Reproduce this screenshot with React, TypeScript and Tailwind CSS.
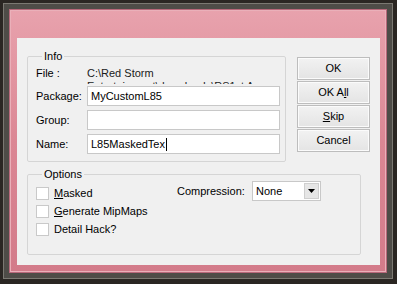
import React from "react";

const font = { fontFamily: '"Liberation Sans", Arial, sans-serif' };

function Btn({ children, className = "" }: { children: React.ReactNode; className?: string }) {
  return (
    <div
      className={
        "h-[23px] w-[73px] flex items-center justify-center border border-[#bdbdbd] bg-gradient-to-b from-[#f2f2f2] to-[#e4e4e4] text-[11px] text-black shadow-[inset_0_0_0_1px_#fbfbfb] " +
        className
      }
    >
      {children}
    </div>
  );
}

function Check({ children }: { children: React.ReactNode }) {
  return (
    <div className="flex items-center h-[13px]">
      <div className="w-[13px] h-[13px] border border-[#c9c9c9] bg-white shrink-0" />
      <span className="ml-[5px] text-[11px] leading-[13px] text-black">{children}</span>
    </div>
  );
}

function Field({ label, value, caret }: { label: string; value: string; caret?: boolean }) {
  return (
    <div className="flex items-center h-[20px]">
      <span className="w-[51px] text-[11px] text-black">{label}</span>
      <div className="w-[193px] h-[20px] border border-[#c8c8c8] bg-white flex items-center pl-[3px] text-[11px] text-black">
        {value}
        {caret && <span className="w-px h-[13px] bg-black ml-[1px]" />}
      </div>
    </div>
  );
}

export default function App() {
  return (
    <div className="w-[397px] h-[284px] bg-[#2a2622] pt-[3px] pl-[3px] overflow-hidden" style={font}>
      <div className="w-[390px] h-[276px] border border-[#7b7972] bg-[#4e4c47] p-[5px]">
        <div className="w-[378px] h-[264px] border border-[#b7687a] bg-gradient-to-b from-[#e8a2ad] via-[#db8794] to-[#d37b8a] pt-[28px] pl-[7px] pr-[6px] pb-[7px] shadow-[inset_0_0_0_1px_#eab0b9]">
          <div className="w-[363px] h-[227px] bg-[#f0f0f0] flex flex-col px-[10px]">
            <div className="flex mt-[12px]">
              <fieldset className="w-[259px] h-[112px] border border-[#d5d5d5] rounded-[2px] pl-[8px] pr-[5px]">
                <legend className="ml-[6px] px-[2px] text-[11px] leading-[13px] text-black">Info</legend>
                <div className="flex h-[18px] mt-[3px]">
                  <span className="w-[51px] text-[11px] leading-[13px] mt-[1px] text-black">File :</span>
                  <span className="w-[190px] h-[17px] overflow-hidden text-[11px] leading-[13px] mt-[1px] text-[#1a1a1a] whitespace-pre">
                    {"C:\\Red Storm\nEntertainment\\downloads\\RS1st Assault\\"}
                  </span>
                </div>
                <div className="flex flex-col gap-[4px] mt-[2px]">
                  <Field label="Package:" value="MyCustomL85" />
                  <Field label="Group:" value="" />
                  <Field label="Name:" value="L85MaskedTex" caret />
                </div>
              </fieldset>
              <div className="ml-[11px] mt-[7px] flex flex-col gap-[1px]">
                <Btn>OK</Btn>
                <Btn>
                  OK A<span className="underline">l</span>l
                </Btn>
                <Btn>
                  <span className="underline">S</span>kip
                </Btn>
                <Btn>Cancel</Btn>
              </div>
            </div>
            <fieldset className="w-[334px] h-[87px] mt-[6px] border border-[#d5d5d5] rounded-[2px] pl-[8px]">
              <legend className="ml-[6px] px-[2px] text-[11px] leading-[13px] text-black">Options</legend>
              <div className="flex">
                <div className="flex flex-col gap-[5px] mt-[6px] w-[141px]">
                  <Check>
                    <span className="underline">M</span>asked
                  </Check>
                  <Check>
                    <span className="underline">G</span>enerate MipMaps
                  </Check>
                  <Check>Detail Hack?</Check>
                </div>
                <div className="flex items-center h-[20px] mt-[0px]">
                  <span className="w-[75px] text-[11px] text-black">Compression:</span>
                  <div className="w-[69px] h-[20px] border border-[#c8c8c8] bg-white flex items-center justify-between pl-[3px] pr-[1px]">
                    <span className="text-[11px] text-black">None</span>
                    <div className="w-[15px] h-[16px] bg-[#e6e6e6] border border-[#cfcfcf] flex items-center justify-center">
                      <svg width="7" height="4" viewBox="0 0 7 4">
                        <polygon points="0,0 7,0 3.5,4" fill="#000" />
                      </svg>
                    </div>
                  </div>
                </div>
              </div>
            </fieldset>
          </div>
        </div>
      </div>
    </div>
  );
}
